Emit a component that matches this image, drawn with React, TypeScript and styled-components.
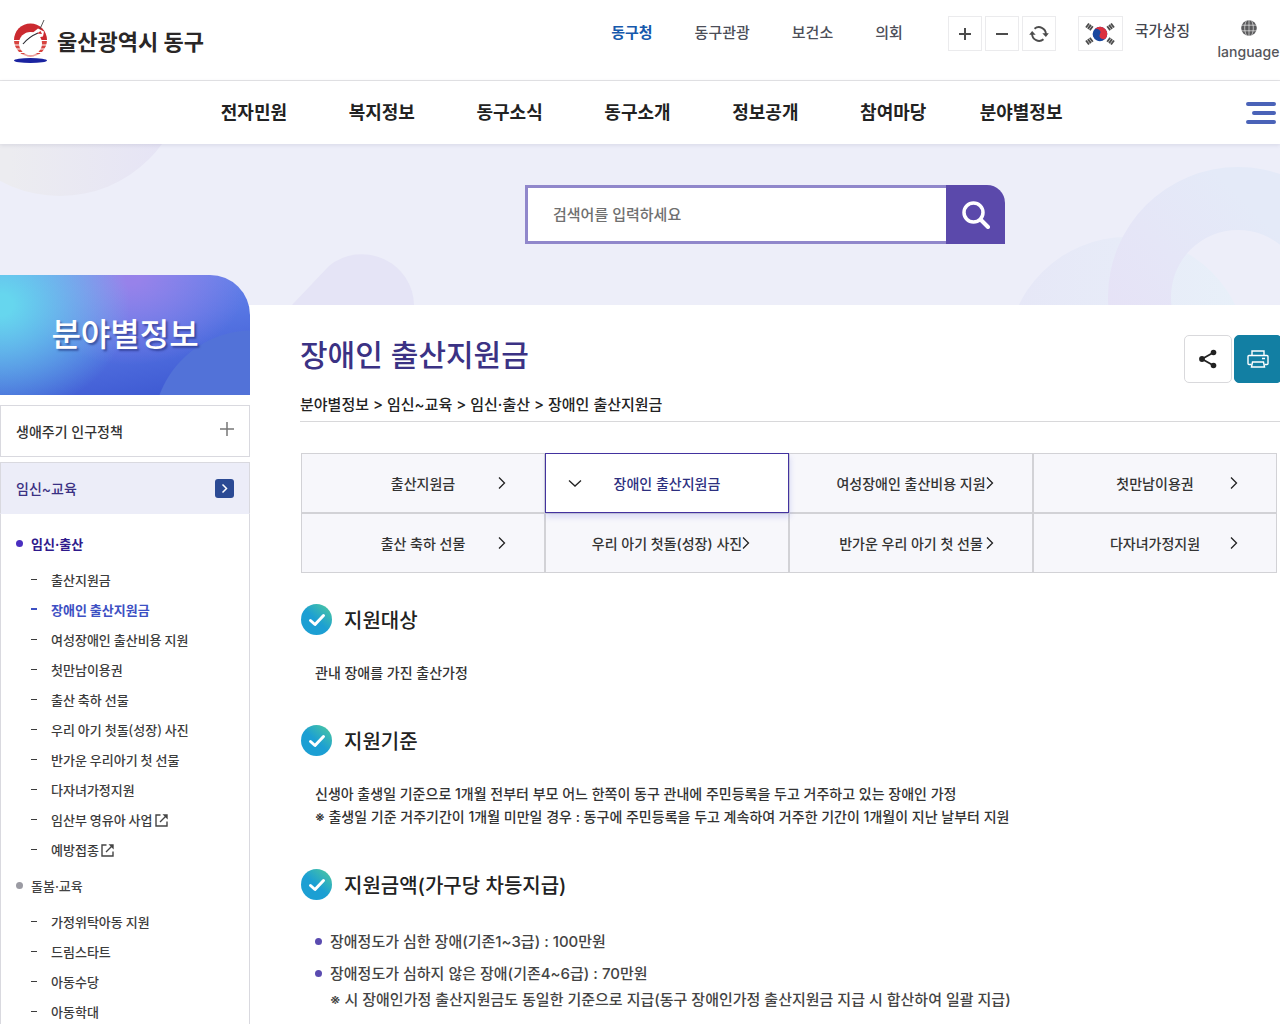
import React from "react";
import styled, { createGlobalStyle, css } from "styled-components";

const GlobalStyle = createGlobalStyle`
  *, *::before, *::after { box-sizing: border-box; }
  html { scrollbar-width: none; }
  body {
    margin: 0;
    overflow-x: hidden;
    background: #fff;
    color: #333;
    font-family: Inter, "Noto Sans CJK KR", sans-serif;
    font-size: 14px;
    font-weight: 500;
  }
  h1, h2, h3, p, ul { margin: 0; padding: 0; font-weight: 500; }
  ul { list-style: none; }
  a { color: inherit; text-decoration: none; }
  button, input { font: inherit; color: inherit; margin: 0; padding: 0; border: 0; background: none; }
  button { cursor: pointer; }
  svg { display: block; flex: none; }
`;

/* ---------- header ---------- */

const TopBar = styled.div`
  display: flex;
  align-items: flex-start;
  height: 81px;
  padding: 16px 0 0 12px;
  border-bottom: 1px solid #e5e5e7;
`;

const Logo = styled.a`
  display: flex;
  align-items: center;
  gap: 8px;
  margin-right: auto;
  padding-top: 3px;
  font-size: 22px;
  font-weight: 700;
  line-height: 46px;
  color: #2a2727;
`;

const SiteLinks = styled.ul`
  display: flex;
  gap: 42px;
  margin-right: 45px;
  font-size: 15px;
  line-height: 34px;
  color: #4c4e58;
`;

const SiteLink = styled.a<{ $current?: boolean }>`
  ${(p) => p.$current && css`
    color: #1659ac;
    font-weight: 700;
  `}
`;

const ZoomGroup = styled.div`
  display: flex;
  gap: 3px;
  margin-right: 22px;
`;

const SquareButton = styled.button`
  display: grid;
  place-items: center;
  width: 34px;
  height: 35px;
  border: 1px solid #ebebed;
`;

const SymbolLink = styled.a`
  display: flex;
  gap: 12px;
  margin-right: 27px;
  font-size: 15px;
  line-height: 30px;
  color: #44464f;
`;

const FlagBox = styled.span`
  display: grid;
  place-items: center;
  width: 45px;
  height: 35px;
  border: 1px solid #ebebed;
`;

const LanguageButton = styled.button`
  display: flex;
  flex-direction: column;
  align-items: center;
  gap: 5px;
  min-width: 63px;
  padding-top: 4px;
  font-size: 14px;
  line-height: 22px;
  color: #55565a;
`;

const NavBar = styled.nav`
  position: relative;
  z-index: 1;
  display: flex;
  align-items: center;
  height: 63px;
  padding: 0 4px 0 190px;
  background: #fff;
  box-shadow: 0 1px 4px rgba(60, 60, 100, 0.12);
`;

const NavList = styled.ul`
  display: grid;
  grid-template-columns: repeat(7, 1fr);
  flex: 0 1 895px;
  text-align: center;
  font-size: 18px;
  font-weight: 700;
  line-height: 62px;
  color: #222;
`;

const MenuButton = styled.button`
  margin-left: auto;
`;

/* ---------- search band ---------- */

const Hero = styled.section`
  position: relative;
  height: 161px;
  padding: 41px 0 0 250px;
  background: #edeef9;
`;

const HeroArt = styled.svg`
  position: absolute;
  inset: 0;
  width: 100%;
  height: 100%;
`;

const SearchForm = styled.form`
  position: relative;
  display: flex;
  width: 480px;
  height: 59px;
  margin: 0 auto;
`;

const SearchInput = styled.input`
  flex: 1;
  min-width: 0;
  padding: 0 25px;
  border: 3px solid #9087cb;
  border-right: 0;
  background: #fff;
  font-size: 15px;
  &::placeholder { color: #707070; opacity: 1; }
`;

const SearchButton = styled.button`
  display: grid;
  place-items: center;
  width: 59px;
  border-radius: 0 18px 0 0;
  background: #5b49ab;
`;

/* ---------- side menu ---------- */

const Columns = styled.div`
  display: flex;
  align-items: flex-start;
`;

const Side = styled.aside`
  position: relative;
  flex: none;
  width: 250px;
  margin-top: -30px;
`;

const SideBanner = styled.h2`
  display: grid;
  place-items: center;
  height: 120px;
  margin-bottom: 10px;
  border-radius: 0 40px 0 0;
  background:
    radial-gradient(circle at 252px 154px, #5272d8 0 98px, transparent 99px),
    radial-gradient(ellipse 130px 110px at 0 30px, #66d6ee 10%, rgba(102, 214, 238, 0) 100%),
    radial-gradient(ellipse 120px 90px at 130px 0, #9782ea 10%, rgba(151, 130, 234, 0) 100%),
    linear-gradient(170deg, #6a8bee 0%, #5877e4 45%, #3f5bd3 90%);
  color: #fff;
  font-size: 32px;
  line-height: 40px;
  text-shadow: 2px 2px 2px rgba(20, 30, 100, 0.5);
`;

const SideHead = styled.a<{ $open?: boolean }>`
  display: flex;
  align-items: center;
  justify-content: space-between;
  height: 52px;
  padding: 0 15px;
  border: 1px solid #d9d9df;
  font-size: 14px;
  color: #333;
  ${(p) => p.$open && css`
    margin-top: 5px;
    border-bottom-color: #ecedf8;
    background: #ecedf8;
    color: #3b3183;
  `}
`;

const SideBody = styled.div`
  padding-top: 8px;
  border: solid #d9d9df;
  border-width: 0 1px;
  font-size: 13px;
`;

const GroupLink = styled.a<{ $current?: boolean }>`
  display: flex;
  align-items: center;
  gap: 8px;
  height: 42px;
  padding-left: 15px;
  color: ${(p) => (p.$current ? "#2f1a8c" : "#444")};
  font-weight: ${(p) => (p.$current ? 700 : 500)};
  &::before {
    content: "";
    width: 7px;
    height: 7px;
    border-radius: 50%;
    background: ${(p) => (p.$current ? "#4a2fc0" : "#9b9ba3")};
  }
`;

const SubLink = styled.a<{ $current?: boolean }>`
  display: flex;
  align-items: center;
  height: 30px;
  padding-left: 30px;
  color: ${(p) => (p.$current ? "#3d50c3" : "#3c3c3c")};
  font-family: "Noto Sans CJK KR", sans-serif;
  font-weight: ${(p) => (p.$current ? 700 : 500)};
  &::before {
    content: "";
    width: 6px;
    height: ${(p) => (p.$current ? 2 : 1)}px;
    margin-right: 14px;
    background: currentColor;
  }
  svg { margin: 2px 0 0 2px; }
`;

/* ---------- content ---------- */

const Main = styled.main`
  flex: 1;
  min-width: 0;
  padding: 30px 0 40px 50px;
`;

const TitleBlock = styled.header`
  position: relative;
  border-bottom: 1px solid #d8d8da;
`;

const TitleRow = styled.div`
  display: flex;
  align-items: flex-start;
  justify-content: space-between;
  height: 58px;
`;

const PageTitle = styled.h1`
  color: #3b3284;
  font-size: 30px;
  line-height: 40px;
`;

const Actions = styled.div`
  display: flex;
  gap: 2px;
  margin-right: -2px;
`;

const ActionButton = styled.button<{ $solid?: boolean }>`
  display: grid;
  place-items: center;
  width: 48px;
  height: 48px;
  border: 1px solid ${(p) => (p.$solid ? "#127fa3" : "#d9d9dc")};
  border-radius: 5px;
  background: ${(p) => (p.$solid ? "#127fa3" : "#fff")};
`;

const Crumbs = styled.p`
  height: 28px;
  font-size: 15px;
  line-height: 24px;
  color: #222;
`;

const Tabs = styled.ul`
  display: grid;
  grid-template-columns: repeat(4, 1fr);
  margin: 31px 3px 0 1px;
`;

const Tab = styled.a<{ $current?: boolean }>`
  position: relative;
  display: grid;
  place-items: center;
  height: 60px;
  border: 1px solid #d2d2d6;
  background: #f7f7fb;
  font-size: 14px;
  color: #333;
  svg { position: absolute; right: 36px; }
  ${(p) => p.$current && css`
    z-index: 1;
    border-color: #43329f;
    background: #fff;
    box-shadow: 1px 4px 6px rgba(90, 100, 220, 0.2);
    color: #2d2f7f;
    svg { right: auto; left: 22px; }
  `}
`;

const SectionTitle = styled.h2`
  display: flex;
  align-items: center;
  gap: 12px;
  height: 32px;
  padding-left: 1px;
  font-size: 20px;
  color: #222;
`;

const Section = styled.section`
  padding-top: 30px;
  & + & { padding-top: 40px; }
`;

const Copy = styled.p`
  margin-top: 26px;
  padding-left: 15px;
  line-height: 23px;
`;

const Bullets = styled.ul`
  display: grid;
  gap: 6px;
  margin-top: 29px;
  padding-left: 15px;
  font-size: 15px;
  line-height: 26px;
  color: #444;
`;

const Bullet = styled.li`
  display: grid;
  grid-template-columns: 15px 1fr;
  &::before {
    content: "";
    width: 7px;
    height: 7px;
    margin-top: 9px;
    border-radius: 50%;
    background: #5a4bb0;
  }
`;

/* ---------- drawings ---------- */

const Emblem = () => (
  <svg width="37" height="46" viewBox="0 0 37 46" aria-hidden="true">
    <defs>
      <clipPath id="disc"><circle cx="18.5" cy="21" r="16.5" /></clipPath>
    </defs>
    <g clipPath="url(#disc)">
      <path fill="#cb2a30" d="M0 0h37v21H0z" />
      <path fill="#d8443f" d="M0 22h37v3.500H0zM0 26.500h37v3H0zM0 30.500h37v2.500H0zM0 34h37v1.500H0zM0 36.500h37v1.500H0z" />
      <circle cx="18.500" cy="24.500" r="11.500" fill="#fff" />
      <path fill="#fff" d="M8 24c0-7 6-11 13-10.500l5-4 6 3-1 5-5 1z" />
    </g>
    <path d="M11 25c4-5 8-8 15-11" fill="none" stroke="#2c2c34" strokeWidth="1.200" />
    <path d="M28 10l4-9" fill="none" stroke="#444" strokeWidth=".9" />
    <path fill="#cb2a30" d="m25 14.500 3.500-2.500 1.500 3z" />
    <ellipse cx="18.500" cy="41.500" rx="16.500" ry="2.600" fill="#1a23a0" />
  </svg>
);

const TaegukFlag = () => (
  <svg width="32" height="26" viewBox="0 0 32 26" aria-hidden="true">
    <g transform="rotate(25 16 13)">
      <circle cx="16" cy="13" r="7.300" fill="#17469e" />
      <path fill="#dc2f3d" d="M8.700 13a7.300 7.300 0 0 1 14.600 0 3.650 3.650 0 0 1-7.300 0 3.650 3.650 0 0 0-7.300 0z" />
    </g>
    <g stroke="#4c4c4c" strokeWidth="1.900">
      <path d="m2 6.500 3-4M3.900 7.900l3-4M5.800 9.300l3-4" />
      <path d="m23.200 20.700 3-4M25.100 22.100l3-4M27 23.500l3-4" />
      <path d="m30 6.500-3-4M28.100 7.900l-3-4M26.200 9.300l-3-4" />
      <path d="m8.800 20.700-3-4M6.900 22.100l-3-4M5 23.500l-3-4" />
    </g>
  </svg>
);

const RefreshIcon = () => (
  <svg width="20" height="18" viewBox="0 0 20 18" aria-hidden="true">
    <path d="M5.500 3.700A7 7 0 0 1 16.900 9M14.500 14.300A7 7 0 0 1 3.100 9" fill="none" stroke="#4c4c4c" strokeWidth="1.900" />
    <path d="M13.300 8.200h6.500L16.900 12zM.2 9.800h6.500L3.100 6z" fill="#4c4c4c" />
  </svg>
);

const GlobeIcon = () => (
  <svg width="16" height="16" viewBox="0 0 16 16" aria-hidden="true">
    <circle cx="8" cy="8" r="7.800" fill="#5a5a5c" />
    <path d="M8 0v16M0 5.200h16M0 10.800h16M5.500.5c-2.400 4.500-2.400 10.500 0 15M10.500.5c2.400 4.500 2.400 10.500 0 15" fill="none" stroke="#fff" strokeWidth=".6" />
  </svg>
);

const HeroShapes = () => (
  <HeroArt viewBox="0 0 1280 161" preserveAspectRatio="xMidYMid slice" aria-hidden="true">
    <defs>
      <linearGradient id="blobA" x1="0.300" x2="1">
        <stop offset="0" stopColor="#ececf0" />
        <stop offset="1" stopColor="#e5e3f6" />
      </linearGradient>
      <linearGradient id="blobB" x1="0" y1="1" x2="1" y2="0">
        <stop offset="0.200" stopColor="#e6e2f6" />
        <stop offset="0.700" stopColor="#e4eaf8" />
      </linearGradient>
      <linearGradient id="blobC">
        <stop offset="0" stopColor="#e6e7f7" />
        <stop offset="1" stopColor="#e8f0f9" />
      </linearGradient>
    </defs>
    <circle cx="60" cy="-74" r="126" fill="url(#blobA)" />
    <path d="M292 161 329 122A52 52 0 0 1 414 161z" fill="#e5e4f6" />
    <circle cx="1127" cy="213" r="120" fill="url(#blobC)" />
    <path fillRule="evenodd" fill="url(#blobB)" d="M1108 153a130 130 0 1 1 260 0 130 130 0 1 1-260 0zm63 0a67 67 0 1 0 134 0 67 67 0 1 0-134 0z" />
  </HeroArt>
);

const CheckBadge = () => (
  <svg width="31" height="31" viewBox="0 0 31 31" aria-hidden="true">
    <defs>
      <linearGradient id="badge" x1="0.200" y1="0.900" x2="0.900" y2="0.100">
        <stop offset="0.450" stopColor="#1c9fd3" />
        <stop offset="1" stopColor="#46c3a6" />
      </linearGradient>
    </defs>
    <circle cx="15.500" cy="15.500" r="15.500" fill="url(#badge)" />
    <path d="m9.500 16.500 4.500 4L22.500 11.500" fill="none" stroke="#fff" strokeWidth="3" strokeLinecap="round" strokeLinejoin="round" />
  </svg>
);

const Chevron = ({ down }: { down?: boolean }) => (
  <svg width="14" height="14" viewBox="0 0 14 14" aria-hidden="true">
    <path d={down ? "m1 4.500 6 5.500 6-5.500" : "m5 1.500 5.500 5.500L5 12.500"} fill="none" stroke="#222" strokeWidth="1.300" />
  </svg>
);

const OutLinkIcon = () => (
  <svg width="13" height="13" viewBox="0 0 13 13" aria-hidden="true">
    <path d="M5.500 1H1v11h11V7.500M5 8l6-6" fill="none" stroke="#444" strokeWidth="1.400" />
    <path d="M7.500.3h5.200v5.200z" fill="#444" />
  </svg>
);

/* ---------- data ---------- */

const navItems = ["전자민원", "복지정보", "동구소식", "동구소개", "정보공개", "참여마당", "분야별정보"];

type Sub = { label: string; current?: boolean; external?: boolean };

const groups: { label: string; current?: boolean; items: Sub[] }[] = [
  {
    label: "임신·출산",
    current: true,
    items: [
      { label: "출산지원금" },
      { label: "장애인 출산지원금", current: true },
      { label: "여성장애인 출산비용 지원" },
      { label: "첫만남이용권" },
      { label: "출산 축하 선물" },
      { label: "우리 아기 첫돌(성장) 사진" },
      { label: "반가운 우리아기 첫 선물" },
      { label: "다자녀가정지원" },
      { label: "임산부 영유아 사업", external: true },
      { label: "예방접종", external: true },
    ],
  },
  {
    label: "돌봄·교육",
    items: [{ label: "가정위탁아동 지원" }, { label: "드림스타트" }, { label: "아동수당" }, { label: "아동학대" }],
  },
];

const tabs = [
  "출산지원금",
  "장애인 출산지원금",
  "여성장애인 출산비용 지원",
  "첫만남이용권",
  "출산 축하 선물",
  "우리 아기 첫돌(성장) 사진",
  "반가운 우리 아기 첫 선물",
  "다자녀가정지원",
];

const currentTab = "장애인 출산지원금";

export default function App() {
  return (
    <>
      <GlobalStyle />
      <header>
        <TopBar>
          <Logo href="#"><Emblem />울산광역시 동구</Logo>
          <SiteLinks>
            <li><SiteLink href="#" $current>동구청</SiteLink></li>
            <li><SiteLink href="#">동구관광</SiteLink></li>
            <li><SiteLink href="#">보건소</SiteLink></li>
            <li><SiteLink href="#">의회</SiteLink></li>
          </SiteLinks>
          <ZoomGroup>
            <SquareButton type="button" aria-label="확대">
              <svg width="14" height="14" viewBox="0 0 14 14"><path d="M7 1v12M1 7h12" stroke="#4c4c4c" strokeWidth="2" /></svg>
            </SquareButton>
            <SquareButton type="button" aria-label="축소">
              <svg width="14" height="14" viewBox="0 0 14 14"><path d="M1 7h12" stroke="#4c4c4c" strokeWidth="2" /></svg>
            </SquareButton>
            <SquareButton type="button" aria-label="초기화"><RefreshIcon /></SquareButton>
          </ZoomGroup>
          <SymbolLink href="#"><FlagBox><TaegukFlag /></FlagBox>국가상징</SymbolLink>
          <LanguageButton type="button"><GlobeIcon />language</LanguageButton>
        </TopBar>
        <NavBar>
          <NavList>
            {navItems.map((item) => <li key={item}><a href="#">{item}</a></li>)}
          </NavList>
          <MenuButton type="button" aria-label="전체메뉴">
            <svg width="30" height="22" viewBox="0 0 30 22">
              <path d="M2 2h26M8 11h20M2 20h26" stroke="#4a63b8" strokeWidth="4" strokeLinecap="round" />
            </svg>
          </MenuButton>
        </NavBar>
      </header>

      <Hero>
        <HeroShapes />
        <SearchForm role="search">
          <SearchInput type="text" aria-label="검색어" placeholder="검색어를 입력하세요" />
          <SearchButton type="submit" aria-label="검색">
            <svg width="28" height="28" viewBox="0 0 28 28">
              <circle cx="11.500" cy="11.500" r="9.500" fill="none" stroke="#fff" strokeWidth="3.500" />
              <path d="m19 19 7 7" stroke="#fff" strokeWidth="4" strokeLinecap="round" />
            </svg>
          </SearchButton>
        </SearchForm>
      </Hero>

      <Columns>
        <Side>
          <SideBanner>분야별정보</SideBanner>
          <SideHead href="#">
            생애주기 인구정책
            <svg width="14" height="20" viewBox="0 0 14 20"><path d="M7 1v14M0 8h14" stroke="#777" strokeWidth="1.500" /></svg>
          </SideHead>
          <SideHead href="#" $open>
            임신~교육
            <svg width="19" height="19" viewBox="0 0 19 19">
              <rect width="19" height="19" rx="3" fill="#2b4a94" />
              <path d="m7.500 5.500 4 4-4 4" fill="none" stroke="#fff" strokeWidth="1.500" />
            </svg>
          </SideHead>
          <SideBody>
            {groups.map((group) => (
              <div key={group.label}>
                <GroupLink href="#" $current={group.current}>{group.label}</GroupLink>
                <ul>
                  {group.items.map((item) => (
                    <li key={item.label}>
                      <SubLink href="#" $current={item.current}>
                        {item.label}
                        {item.external && <OutLinkIcon />}
                      </SubLink>
                    </li>
                  ))}
                </ul>
              </div>
            ))}
          </SideBody>
        </Side>

        <Main>
          <TitleBlock>
            <TitleRow>
              <PageTitle>장애인 출산지원금</PageTitle>
              <Actions>
                <ActionButton type="button" aria-label="공유">
                  <svg width="18" height="20" viewBox="0 0 18 20">
                    <path d="M14.500 3.500 3 10l11.500 6.500" fill="none" stroke="#222" strokeWidth="1.800" />
                    <g fill="#222"><circle cx="14.500" cy="3.500" r="2.800" /><circle cx="3" cy="10" r="2.900" /><circle cx="14.500" cy="16.500" r="2.800" /></g>
                  </svg>
                </ActionButton>
                <ActionButton type="button" aria-label="인쇄" $solid>
                  <svg width="22" height="18" viewBox="0 0 22 18" fill="none" stroke="#fff" strokeWidth="1.400">
                    <path d="M5 5.500V1h12v4.500M4.500 14.500H2a1 1 0 0 1-1-1v-7a1 1 0 0 1 1-1h18a1 1 0 0 1 1 1v7a1 1 0 0 1-1 1h-2.500M15 8.500h3" />
                    <path d="M5.500 12h11l1 5h-13z" />
                  </svg>
                </ActionButton>
              </Actions>
            </TitleRow>
            <Crumbs>분야별정보 &gt; 임신~교육 &gt; 임신·출산 &gt; 장애인 출산지원금</Crumbs>
          </TitleBlock>

          <Tabs>
            {tabs.map((tab) => (
              <li key={tab}>
                <Tab href="#" $current={tab === currentTab}>
                  {tab}
                  <Chevron down={tab === currentTab} />
                </Tab>
              </li>
            ))}
          </Tabs>

          <Section>
            <SectionTitle><CheckBadge />지원대상</SectionTitle>
            <Copy>관내 장애를 가진 출산가정</Copy>
          </Section>
          <Section>
            <SectionTitle><CheckBadge />지원기준</SectionTitle>
            <Copy>
              신생아 출생일 기준으로 1개월 전부터 부모 어느 한쪽이 동구 관내에 주민등록을 두고 거주하고 있는 장애인 가정
              <br />※ 출생일 기준 거주기간이 1개월 미만일 경우 : 동구에 주민등록을 두고 계속하여 거주한 기간이 1개월이 지난 날부터 지원
            </Copy>
          </Section>
          <Section>
            <SectionTitle><CheckBadge />지원금액(가구당 차등지급)</SectionTitle>
            <Bullets>
              <Bullet>장애정도가 심한 장애(기존1~3급) : 100만원</Bullet>
              <Bullet>
                <span>
                  장애정도가 심하지 않은 장애(기존4~6급) : 70만원
                  <br />※ 시 장애인가정 출산지원금도 동일한 기준으로 지급(동구 장애인가정 출산지원금 지급 시 합산하여 일괄 지급)
                </span>
              </Bullet>
            </Bullets>
          </Section>
        </Main>
      </Columns>
    </>
  );
}
